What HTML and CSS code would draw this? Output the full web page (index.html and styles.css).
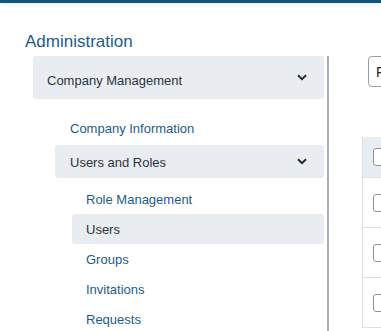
FILE: index.html
```html
<!DOCTYPE html>
<html lang="en">
<head>
    <meta charset="UTF-8">
    <meta name="viewport" content="width=device-width, initial-scale=1.0">
    <title>Administration</title>
    <link rel="stylesheet" href="styles.css">
</head>
<body>
    <header class="topbar"></header>

    <div class="page">
        <h1 class="page-title">Administration</h1>

        <div class="layout">
            <nav class="sidenav">
                <div class="nav-group nav-group-top">
                    <span class="nav-group-label">Company Management</span>
                    <svg class="chevron" width="10" height="7" viewBox="0 0 10 7"><path d="M1 1.2l4 4 4-4" fill="none" stroke="currentColor" stroke-width="2"/></svg>
                </div>

                <ul class="nav-sub">
                    <li><a href="#" class="nav-link">Company Information</a></li>
                    <li>
                        <div class="nav-group nav-group-sub">
                            <span>Users and Roles</span>
                            <svg class="chevron" width="10" height="7" viewBox="0 0 10 7"><path d="M1 1.2l4 4 4-4" fill="none" stroke="currentColor" stroke-width="2"/></svg>
                        </div>
                        <ul class="nav-leaf">
                            <li><a href="#" class="nav-link">Role Management</a></li>
                            <li><a href="#" class="nav-link active">Users</a></li>
                            <li><a href="#" class="nav-link">Groups</a></li>
                            <li><a href="#" class="nav-link">Invitations</a></li>
                            <li><a href="#" class="nav-link">Requests</a></li>
                        </ul>
                    </li>
                </ul>
            </nav>

            <main class="content">
                <div class="toolbar">
                    <input type="text" class="filter-input" value="F">
                </div>

                <table class="user-table">
                    <thead>
                        <tr><th><span class="checkbox"></span></th><th></th></tr>
                    </thead>
                    <tbody>
                        <tr><td><span class="checkbox"></span></td><td></td></tr>
                        <tr><td><span class="checkbox"></span></td><td></td></tr>
                        <tr><td><span class="checkbox"></span></td><td></td></tr>
                    </tbody>
                </table>
            </main>
        </div>
    </div>
</body>
</html>
```

FILE: styles.css
```css
html, body {
    overflow: hidden;
}

body {
    font-family: "Liberation Sans", Arial, sans-serif;
    margin: 0;
    padding: 0;
    color: #2c3440;
    background-color: #fff;
}

.topbar {
    height: 3px;
    background-color: #11557f;
    box-shadow: 0 1px 4px rgba(0, 0, 0, 0.12);
}

.page {
    padding-left: 25px;
    width: 700px;
}

.page-title {
    font-size: 17px;
    font-weight: normal;
    line-height: 20px;
    color: #1b5c8c;
    margin: 29px 0 4px 0;
}

.layout {
    display: flex;
}

.sidenav {
    flex: 0 0 291px;
    margin-left: 8px;
    padding-right: 3px;
    border-right: 2px solid #a9adb4;
    font-size: 13px;
}

.nav-group {
    display: flex;
    align-items: center;
    justify-content: space-between;
    height: 43px;
    padding: 0 17px 0 14px;
    background-color: #e9ecf0;
    border-radius: 3px;
    color: #2c3440;
}

.nav-group-top .nav-group-label {
    padding-top: 5px;
}

.chevron {
    color: #1f2b3b;
    margin-top: -1px;
}

.nav-sub {
    list-style: none;
    margin: 13px 0 0 22px;
    padding: 0;
}

.nav-group-sub {
    height: 33px;
    padding-left: 15px;
}

.nav-group-sub span {
    padding-top: 2px;
}

.nav-link {
    display: flex;
    align-items: center;
    height: 33px;
    padding-left: 15px;
    color: #1b5c8c;
    text-decoration: none;
    border-radius: 3px;
}

.nav-leaf {
    list-style: none;
    margin: 6px 0 0 17px;
    padding: 0;
}

.nav-leaf .nav-link {
    height: 30px;
    padding-left: 14px;
}

.nav-link.active {
    background-color: #e9ecf0;
    color: #2c3440;
}

.content {
    flex: 0 0 auto;
    padding-left: 33px;
}

.toolbar {
    padding-left: 6px;
}

.filter-input {
    box-sizing: border-box;
    height: 31px;
    width: 200px;
    padding: 0 7px;
    border: 1px solid #9a9fa6;
    border-radius: 4px;
    font-family: inherit;
    font-size: 14px;
    color: #222;
}

.user-table {
    margin-top: 50px;
    width: 400px;
    border-collapse: collapse;
    border-left: 1px solid #dde1e6;
    border-bottom: 1px solid #dde1e6;
    font-size: 13px;
}

.user-table th {
    height: 40px;
    padding: 0 0 0 10px;
    background-color: #e8edf4;
    text-align: left;
    font-weight: normal;
    width: 30px;
}

.user-table td {
    height: 49px;
    padding: 0 0 0 10px;
    border-top: 1px solid #dde1e6;
}

.checkbox {
    display: block;
    box-sizing: border-box;
    width: 18px;
    height: 18px;
    border: 1px solid #8d9299;
    border-radius: 3px;
    background-color: #fff;
}
```
